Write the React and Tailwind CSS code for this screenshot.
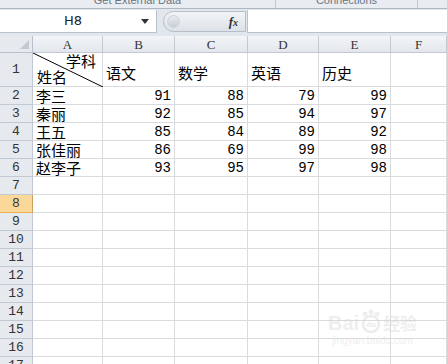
import React from 'react';

const cols = ['A', 'B', 'C', 'D', 'E', 'F'];

const data = [
  ['李三', 91, 88, 79, 99],
  ['秦丽', 92, 85, 94, 97],
  ['王五', 85, 84, 89, 92],
  ['张佳丽', 86, 69, 99, 98],
  ['赵李子', 93, 95, 97, 98],
];

const cellFont = { fontFamily: '"Liberation Mono", "Noto Sans CJK SC", monospace' };
const cjk = { fontFamily: '"Noto Sans CJK SC", sans-serif' };

function RowHead({ n, selected }) {
  return (
    <div
      className={`flex items-center justify-center border-r border-b text-[13px] leading-[16px] ${
        selected
          ? 'bg-[#f9d89a] border-b-[#f0b14c] border-r-[#c9a15c] text-[#3a3a3a]'
          : 'bg-[#e6e9ee] border-[#c3c9d2] text-[#333]'
      }`}
      style={cellFont}
    >
      {n}
    </div>
  );
}

function Cell({ children, right }) {
  return (
    <div
      className={`flex items-center border-r border-b border-[#d9dbde] text-[14px] leading-[16px] text-black overflow-hidden whitespace-nowrap ${
        right ? 'justify-end pr-[3px]' : 'pl-[3px]'
      }`}
      style={cellFont}
    >
      {children}
    </div>
  );
}

export default function App() {
  const emptyRows = [];
  for (let r = 7; r <= 17; r++) emptyRows.push(r);

  return (
    <div className="relative w-[447px] h-[364px] overflow-hidden bg-white" style={{ fontFamily: '"Liberation Sans", sans-serif' }}>
      {/* ribbon leftover */}
      <div className="flex h-[8px] bg-[#e9edf2] overflow-hidden text-[11px] text-[#6b7685]">
        <div className="w-[275px] flex justify-center">
          <span className="-mt-[7px] leading-[14px]">Get External Data</span>
        </div>
        <div className="w-[143px] flex justify-center border-l border-r border-[#c2cad4]">
          <span className="-mt-[7px] leading-[14px]">Connections</span>
        </div>
        <div className="flex-1" />
      </div>
      <div className="h-px bg-[#aeb7c2]" />

      {/* formula bar */}
      <div className="flex items-center h-[27px] bg-[#e2e7ed] pt-px pb-[3px]">
        <div className="relative w-[157px] h-[23px] bg-white border-r border-b border-[#b9c2cc] flex items-center">
          <span className="w-[146px] text-center text-[13px] text-[#222]" style={{ fontFamily: '"DejaVu Sans", sans-serif' }}>
            H8
          </span>
          <svg width="8" height="5" viewBox="0 0 8 5" className="ml-[-5px]">
            <path d="M0 0 L8 0 L4 5 Z" fill="#333" />
          </svg>
        </div>
        <div className="ml-[6px] w-[83px] h-[21px] rounded-l-full border border-[#b6bec8] bg-gradient-to-b from-[#f2f4f6] to-[#dde2e8] flex items-center">
          <div className="ml-[3px] w-[13px] h-[13px] rounded-full bg-gradient-to-b from-[#e9ecef] to-[#c8ced6] border border-[#cdd3da]" />
          <div className="flex-1" />
          <span className="mr-[7px] text-[13px] italic font-bold text-[#333]" style={{ fontFamily: '"Liberation Serif", serif' }}>
            f<span className="text-[10px]">x</span>
          </span>
        </div>
        <div className="ml-px flex-1 h-[23px] bg-white border-l border-b border-[#b9c2cc]" />
      </div>

      {/* grid */}
      <div className="grid grid-cols-[33px_70px_72px_73px_71px_72px_1fr] grid-rows-[17px_34px_repeat(16,18px)]">
        {/* header row */}
        <div className="relative bg-[#e6e9ee] border-r border-b border-[#b9c1cc]">
          <svg width="9" height="9" viewBox="0 0 9 9" className="absolute right-[3px] bottom-[3px]">
            <path d="M9 0 L9 9 L0 9 Z" fill="#c4c9d0" />
          </svg>
        </div>
        {cols.map((c) => (
          <div
            key={c}
            className="flex items-center justify-center bg-gradient-to-b from-[#f3f5f8] to-[#e3e7ec] border-r border-b border-[#c3c9d2] text-[13px] leading-[15px] text-[#333]"
            style={{ fontFamily: '"Liberation Serif", serif' }}
          >
            {c}
          </div>
        ))}

        {/* row 1 */}
        <RowHead n={1} />
        <div className="relative flex flex-col justify-end border-r border-b border-[#d9dbde] text-[15px] leading-[16px] pb-px" style={cjk}>
          <svg className="absolute inset-0" width="70" height="34" viewBox="0 0 70 34">
            <line x1="0" y1="0" x2="70" y2="34" stroke="#000" strokeWidth="1" />
          </svg>
          <div className="text-right pr-[6px]">学科</div>
          <div className="pl-[4px]">姓名</div>
        </div>
        {['语文', '数学', '英语', '历史'].map((t) => (
          <div key={t} className="flex items-end pb-[5px] pl-[3px] border-r border-b border-[#d9dbde] text-[15px] leading-[16px]" style={cjk}>
            {t}
          </div>
        ))}
        <Cell />

        {/* data rows */}
        {data.map((row, i) => (
          <React.Fragment key={i}>
            <RowHead n={i + 2} />
            <Cell>
              <span className="text-[15px] leading-[16px]" style={cjk}>{row[0]}</span>
            </Cell>
            {row.slice(1).map((v, j) => (
              <Cell key={j} right>
                {v}
              </Cell>
            ))}
            <Cell />
          </React.Fragment>
        ))}

        {/* empty rows */}
        {emptyRows.map((r) => (
          <React.Fragment key={r}>
            <RowHead n={r} selected={r === 8} />
            {cols.map((c) => (
              <Cell key={c} />
            ))}
          </React.Fragment>
        ))}
      </div>

      {/* watermark */}
      <div className="absolute left-[328px] top-[309px] flex flex-col items-center opacity-40 pointer-events-none">
        <div className="flex items-end text-[#d6d6d6] font-bold">
          <span className="text-[20px] leading-[20px]">Bai</span>
          <svg width="22" height="24" viewBox="0 0 22 24" className="mx-[1px]">
            <circle cx="5" cy="5" r="2.5" fill="#d8d8d8" />
            <circle cx="11" cy="3" r="2.5" fill="#d8d8d8" />
            <circle cx="17" cy="5" r="2.5" fill="#d8d8d8" />
            <circle cx="11" cy="15" r="8" fill="none" stroke="#d0d0d0" strokeWidth="2.5" />
            <text x="11" y="18" fontSize="8" textAnchor="middle" fill="#d0d0d0">du</text>
          </svg>
          <span className="text-[17px] leading-[20px]" style={cjk}>经验</span>
        </div>
        <span className="text-[10px] text-[#d6d6d6] leading-[12px] mt-[2px]">jingyan.baidu.com</span>
      </div>
    </div>
  );
}
